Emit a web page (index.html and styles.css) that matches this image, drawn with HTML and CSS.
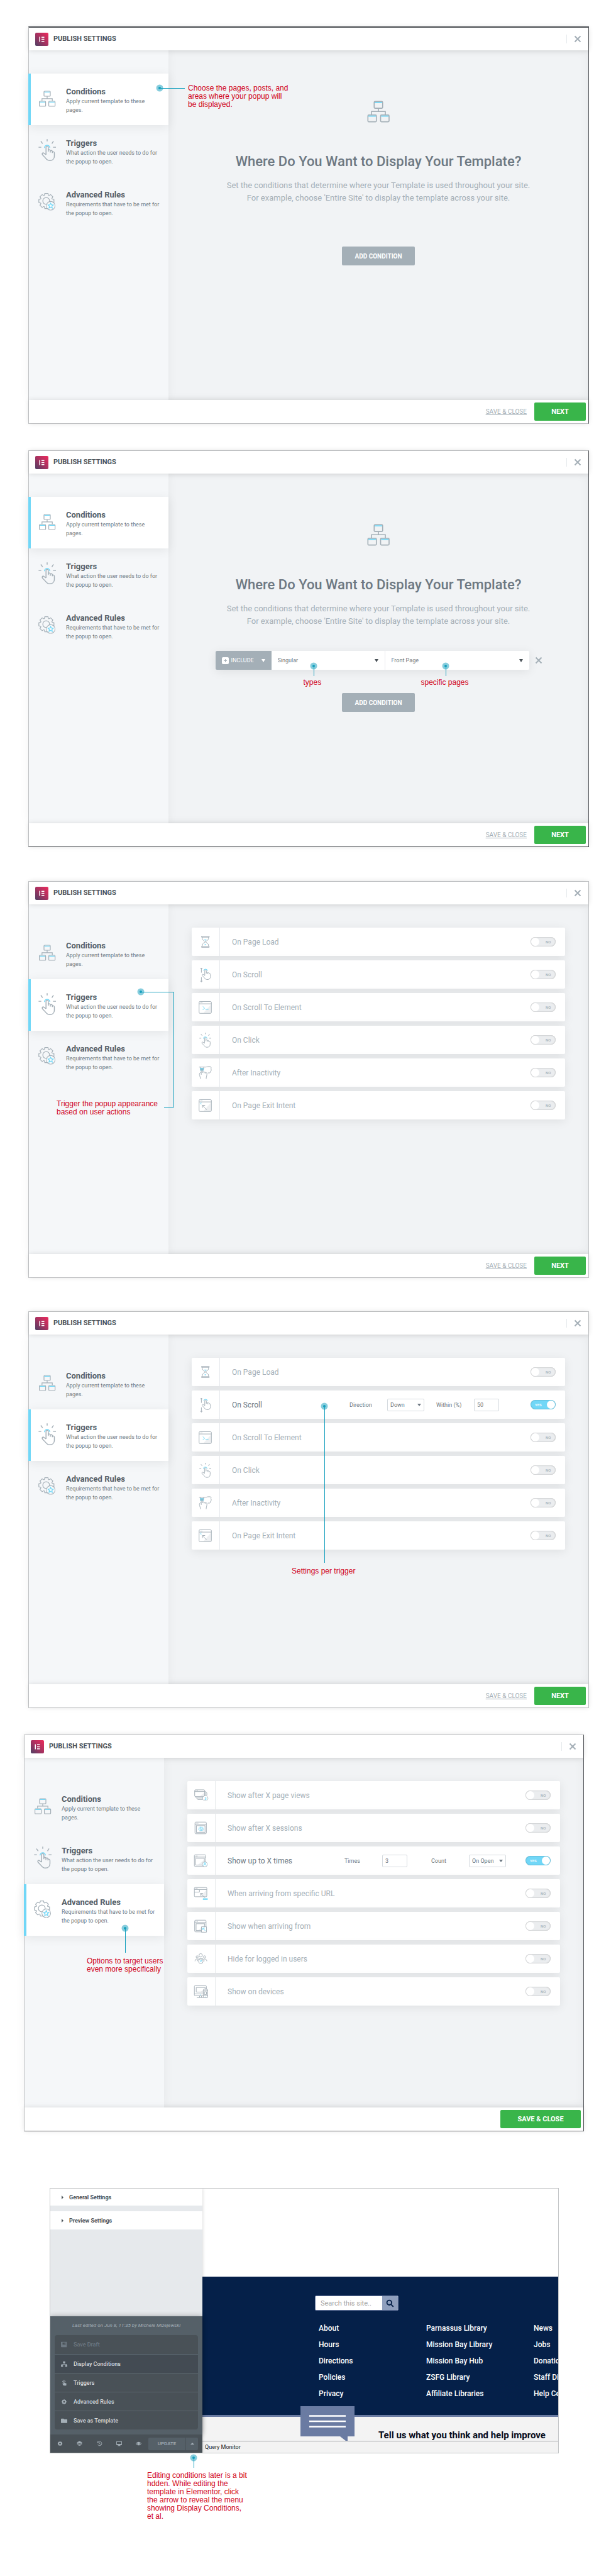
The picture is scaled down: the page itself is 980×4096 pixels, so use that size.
FILE: index.html
```html
<!DOCTYPE html>
<html lang="en">
<head>
<meta charset="utf-8">
<meta name="viewport" content="width=device-width, initial-scale=1">
<title>Publish Settings walkthrough</title>
<link rel="stylesheet" href="styles.css">
</head>
<body>
<svg class="defs" aria-hidden="true">
  <defs>
    <linearGradient id="brand" x1="0" y1="1" x2="1" y2="0"><stop offset="0" stop-color="#4c4064"/><stop offset=".5" stop-color="#a83260"/><stop offset="1" stop-color="#ee2a5c"/></linearGradient>
    <g id="logo"><rect width="21" height="21" rx="2" fill="url(#brand)"/><path d="M6.500 6.500h1.500v8h-1.500zM10 6.500h4.500v1.500h-4.500zM10 9.800h4.500v1.500h-4.500zM10 13h4.500v1.500h-4.500z" fill="#fff"/></g>
    <g id="tree"><path d="M14 16v3.800M5.800 23.500v-3.700h16.400v3.700" class="g"/><rect x="9" y="8" width="10" height="8" rx="1" class="g"/><rect x="1.600" y="24" width="10" height="8" rx="1" class="g"/><rect x="16.600" y="24" width="10" height="8" rx="1" class="g"/><path d="M9.600 9.300h8.800M2.200 25.300h8.800M17.200 25.300h8.800" class="b"/></g>
    <path id="gear" d="M-2.500-12L2.500-12 3.300-9 4-8.700 6.700-10.200 10.200-6.700 8.700-4 9-3.300 12-2.500 12 2.500 9 3.300 8.700 4 10.200 6.700 6.700 10.200 4 8.700 3.300 9 2.500 12-2.500 12-3.300 9-4 8.700-6.700 10.200-10.200 6.700-8.700 4-9 3.300-12 2.500-12-2.500-9-3.300-8.700-4-10.200-6.700-6.700-10.200-4-8.700-3.300-9Z"/>
    <g id="rules"><use href="#gear" x="12.800" y="18.600" class="g"/><circle cx="12.500" cy="18.500" r="5.400" class="g"/><circle cx="19.600" cy="26.200" r="6.800" class="g"/><circle cx="19.600" cy="26.200" r="6.200" fill="#f9fafb"/><path d="M19.600 22l1.200 2.700 2.900.3-2.200 2 .7 2.900-2.600-1.500-2.600 1.500.7-2.900-2.200-2 2.900-.3z" class="b"/></g>
    <path id="hand" d="M85 97V64a5 5 0 0 1 10 0v20M95 77a5 5 0 0 1 9 2v8M104 80a5 5 0 0 1 9 3v6M113 84c5-2 9 1 9 6v13c0 12-8 20-20 20-10 0-14-4-19-11L69 97c-3-5 1-9 5-8l11 8"/>
    <g id="click"><use href="#hand" x="-2" y="15" class="g"/><path d="M88 43v10M60 52l8 11M116 52l-7 11M50 79h12M114 79h13" class="g"/><path d="M76 82a12 12 0 0 1 24 0" class="b"/></g>
    <g id="load"><path d="M64 54h50v6H64zM64 120h50v6H64zM69 60v10c0 9 14 14 20 20 6-6 20-11 20-20V60M69 120v-10c0-9 14-14 20-20 6 6 20 11 20 20v10" class="g"/><path d="M83 77h12l-6 4zM84 105l7 3-6 3" class="b"/></g>
    <g id="scroll"><use href="#hand" class="g"/><path d="M63 78V47M56 55l7-8 7 8M63 108v30M56 131l7 8 7-8" class="g"/><path d="M78 67a12 12 0 0 1 24 0" class="b"/></g>
    <g id="win"><path d="M126 72v56H76z" fill="#eef0f2"/><rect x="48" y="53" width="80" height="77" rx="6" class="g"/><path d="M48 68h80M55 61h3M61 61h3M67 61h3" class="g"/></g>
    <g id="element"><use href="#win"/><path d="M72 85l12 11-12 12M89 104h20" class="b"/></g>
    <g id="exit"><use href="#win"/><path d="M98 120L70 91M70 106V90h17" class="g"/><path d="M56 74l7 8M63 74l-7 8" class="b"/></g>
    <g id="idle"><rect x="54" y="60" width="24" height="17" fill="#71c9e4"/><path d="M48 54h44l13-3h16c7 2 7 8 2 11 7 2 7 8 1 10 5 3 4 10-2 10 2 6-2 10-8 10h-9M55 54v8M78 54v14M62 104V74c0-8 10-8 10 0v18M72 86c4-4 9-2 9 4v4M81 88c4-3 9-1 9 4v4M90 91c5-2 9 0 9 5 1 14-5 20-5 35M62 88c-12 2-14 12-10 22l6 21" class="g"/></g>
    <g id="views"><path d="M112 72v26H80z" fill="#eef0f2"/><rect x="48" y="55" width="65" height="44" rx="5" class="g"/><path d="M48 66h65M54 61h3M60 61h3M66 61h3M53 100l6 8h40M62 110l6 8h32M114 63l6 4v24M121 70l6 4v18" class="g"/><circle cx="117" cy="110" r="17" class="g"/><circle cx="117" cy="110" r="15" fill="#fff"/><text x="117" y="119" class="num">3</text></g>
    <g id="frame"><rect x="48" y="52" width="74" height="76" rx="6" class="g"/><path d="M48 67h74M54 60h3M60 60h3M66 60h3" class="g"/><rect x="57" y="75" width="56" height="44" class="g"/><path d="M111 84v33H72z" fill="#eef0f2"/></g>
    <g id="sessions"><use href="#frame" x="2"/><path d="M72 98c9-12 25-12 34 0-9 12-25 12-34 0zM89 92v12M83 96l12 4M74 88l4 4M82 83l2 5M89 81v5M97 83l-2 5M104 88l-4 4" class="b"/></g>
    <g id="times"><use href="#frame" x="-2"/><circle cx="114" cy="114" r="16" class="g"/><circle cx="114" cy="114" r="14" fill="#fff"/><circle cx="114" cy="108" r="5" class="b"/><path d="M105 123c0-13 18-13 18 0" class="b"/></g>
    <g id="url"><path d="M126 68v42H82z" fill="#eef0f2"/><rect x="46" y="52" width="81" height="60" rx="5" class="g"/><path d="M46 65h81M52 58h3M58 58h3M64 58h3M46 82h33V66M116 120L86 91M86 106V90h16" class="g"/><path d="M103 124h28v7h-28z" class="b"/></g>
    <g id="from"><use href="#frame"/><path d="M92 95h33v35H92z" class="g"/><path d="M94 97h29v31H94z" fill="#fff"/><path d="M118 122l-16-17M101 116v-12h12" class="b"/></g>
    <g id="logged"><circle cx="87" cy="68" r="11" class="g"/><circle cx="64" cy="78" r="7" class="g"/><circle cx="112" cy="78" r="7" class="g"/><path d="M50 106c0-10 6-16 18-14M127 106c0-10-6-16-18-14M66 106c0-26 44-26 44 0" class="g"/><circle cx="88" cy="106" r="15" class="g"/><path d="M82 100l12 12M94 100l-12 12" class="b"/></g>
    <g id="devices"><path d="M116 70v22H88z" fill="#eef0f2"/><rect x="46" y="52" width="78" height="66" rx="6" class="g"/><path d="M58 64h58v30H58zM46 106h60M80 118v10M92 118v10M62 130h44" class="g"/><rect x="104" y="76" width="29" height="55" rx="4" class="g"/><path d="M106 78h25v51h-25z" fill="#fff"/><path d="M106 84h25M106 118h25M111 92h14v18h-14z" class="g"/><path d="M86 110v6M117 125h3" class="b"/></g>
    <path id="cross" d="M.5.5l9 9M9.500.5l-9 9"/>
  </defs>
</svg>

<main class="page">

<!-- Conditions, nothing added yet -->
<section class="modal modal-empty">
  <header class="modal-head"><svg class="logo" viewBox="0 0 21 21"><use href="#logo"/></svg><h2>PUBLISH SETTINGS</h2><button class="close" aria-label="Close"><svg viewBox="0 0 10 10"><use href="#cross"/></svg></button></header>
  <div class="modal-body">
    <nav class="tabs">
      <a href="#" class="tab active"><svg viewBox="0 0 28 40"><use href="#tree"/></svg><span><strong>Conditions</strong>Apply current template to these<br>pages.</span></a>
      <a href="#" class="tab"><svg viewBox="49 37 78 111"><use href="#click"/></svg><span><strong>Triggers</strong>What action the user needs to do for the popup to open.</span></a>
      <a href="#" class="tab"><svg viewBox="0 0 28 40"><use href="#rules"/></svg><span><strong>Advanced Rules</strong>Requirements that have to be met for the popup to open.</span></a>
    </nav>
    <div class="where">
      <svg class="hero" viewBox="1 7 26 26"><use href="#tree"/></svg>
      <h1>Where Do You Want to Display Your Template?</h1>
      <p>Set the conditions that determine where your Template is used throughout your site.<br>For example, choose 'Entire Site' to display the template across your site.</p>
      <button class="add">ADD CONDITION</button>
    </div>
  </div>
  <footer class="modal-foot"><a href="#">SAVE &amp; CLOSE</a><button class="go">NEXT</button></footer>
  <svg class="lead lead-a" viewBox="0 0 48 12"><circle cx="6" cy="6" r="5.500"/><path d="M6 6.500h40"/><circle cx="6" cy="6" r="2" class="dot"/></svg>
  <p class="note note-a">Choose the pages, posts, and<br>areas where your popup will<br>be displayed.</p>
</section>

<!-- Conditions with one rule -->
<section class="modal modal-rule">
  <header class="modal-head"><svg class="logo" viewBox="0 0 21 21"><use href="#logo"/></svg><h2>PUBLISH SETTINGS</h2><button class="close" aria-label="Close"><svg viewBox="0 0 10 10"><use href="#cross"/></svg></button></header>
  <div class="modal-body">
    <nav class="tabs">
      <a href="#" class="tab active"><svg viewBox="0 0 28 40"><use href="#tree"/></svg><span><strong>Conditions</strong>Apply current template to these<br>pages.</span></a>
      <a href="#" class="tab"><svg viewBox="49 37 78 111"><use href="#click"/></svg><span><strong>Triggers</strong>What action the user needs to do for the popup to open.</span></a>
      <a href="#" class="tab"><svg viewBox="0 0 28 40"><use href="#rules"/></svg><span><strong>Advanced Rules</strong>Requirements that have to be met for the popup to open.</span></a>
    </nav>
    <div class="where">
      <svg class="hero" viewBox="1 7 26 26"><use href="#tree"/></svg>
      <h1>Where Do You Want to Display Your Template?</h1>
      <p>Set the conditions that determine where your Template is used throughout your site.<br>For example, choose 'Entire Site' to display the template across your site.</p>
      <div class="rule">
        <div class="rule-fields">
          <div class="pick include"><svg class="plus" viewBox="0 0 11 11"><rect width="11" height="11" rx="2" fill="#fff"/><path d="M5.500 3v5M3 5.500h5" stroke="#a4afb7"/></svg><select aria-label="Include or exclude"><option>INCLUDE</option></select></div>
          <div class="pick type"><select aria-label="Type"><option>Singular</option></select>
            <svg class="lead lead-down" viewBox="0 0 12 22"><circle cx="6" cy="6" r="5.500"/><path d="M6.500 6v16"/><circle cx="6" cy="6" r="2" class="dot"/></svg><span class="note note-down">types</span></div>
          <div class="pick where-page"><select aria-label="Specific page"><option>Front Page</option></select>
            <svg class="lead lead-down" viewBox="0 0 12 22"><circle cx="6" cy="6" r="5.500"/><path d="M6.500 6v16"/><circle cx="6" cy="6" r="2" class="dot"/></svg><span class="note note-down">specific pages</span></div>
        </div>
        <button class="remove" aria-label="Remove condition"><svg viewBox="0 0 10 10"><use href="#cross"/></svg></button>
      </div>
      <button class="add">ADD CONDITION</button>
    </div>
  </div>
  <footer class="modal-foot"><a href="#">SAVE &amp; CLOSE</a><button class="go">NEXT</button></footer>
</section>

<!-- Triggers, all off -->
<section class="modal modal-triggers">
  <header class="modal-head"><svg class="logo" viewBox="0 0 21 21"><use href="#logo"/></svg><h2>PUBLISH SETTINGS</h2><button class="close" aria-label="Close"><svg viewBox="0 0 10 10"><use href="#cross"/></svg></button></header>
  <div class="modal-body">
    <nav class="tabs">
      <a href="#" class="tab"><svg viewBox="0 0 28 40"><use href="#tree"/></svg><span><strong>Conditions</strong>Apply current template to these<br>pages.</span></a>
      <a href="#" class="tab active"><svg viewBox="49 37 78 111"><use href="#click"/></svg><span><strong>Triggers</strong>What action the user needs to do for the popup to open.</span></a>
      <a href="#" class="tab"><svg viewBox="0 0 28 40"><use href="#rules"/></svg><span><strong>Advanced Rules</strong>Requirements that have to be met for the popup to open.</span></a>
    </nav>
    <div class="list">
      <div class="row"><svg viewBox="0 0 180 180"><use href="#load"/></svg><h3>On Page Load</h3><label class="toggle"><input type="checkbox" aria-label="On Page Load"><span>NO</span></label></div>
      <div class="row"><svg viewBox="0 0 180 180"><use href="#scroll"/></svg><h3>On Scroll</h3><label class="toggle"><input type="checkbox" aria-label="On Scroll"><span>NO</span></label></div>
      <div class="row"><svg viewBox="0 0 180 180"><use href="#element"/></svg><h3>On Scroll To Element</h3><label class="toggle"><input type="checkbox" aria-label="On Scroll To Element"><span>NO</span></label></div>
      <div class="row"><svg viewBox="0 0 180 180"><use href="#click"/></svg><h3>On Click</h3><label class="toggle"><input type="checkbox" aria-label="On Click"><span>NO</span></label></div>
      <div class="row"><svg viewBox="0 0 180 180"><use href="#idle"/></svg><h3>After Inactivity</h3><label class="toggle"><input type="checkbox" aria-label="After Inactivity"><span>NO</span></label></div>
      <div class="row"><svg viewBox="0 0 180 180"><use href="#exit"/></svg><h3>On Page Exit Intent</h3><label class="toggle"><input type="checkbox" aria-label="On Page Exit Intent"><span>NO</span></label></div>
    </div>
  </div>
  <footer class="modal-foot"><a href="#">SAVE &amp; CLOSE</a><button class="go">NEXT</button></footer>
  <svg class="lead lead-c" viewBox="0 0 60 192"><circle cx="6" cy="6" r="5.500"/><path d="M6 6.500h52.500v183H43"/><circle cx="6" cy="6" r="2" class="dot"/></svg>
  <p class="note note-c">Trigger the popup appearance<br>based on user actions</p>
</section>

<!-- Triggers, On Scroll enabled -->
<section class="modal modal-scroll">
  <header class="modal-head"><svg class="logo" viewBox="0 0 21 21"><use href="#logo"/></svg><h2>PUBLISH SETTINGS</h2><button class="close" aria-label="Close"><svg viewBox="0 0 10 10"><use href="#cross"/></svg></button></header>
  <div class="modal-body">
    <nav class="tabs">
      <a href="#" class="tab"><svg viewBox="0 0 28 40"><use href="#tree"/></svg><span><strong>Conditions</strong>Apply current template to these<br>pages.</span></a>
      <a href="#" class="tab active"><svg viewBox="49 37 78 111"><use href="#click"/></svg><span><strong>Triggers</strong>What action the user needs to do for the popup to open.</span></a>
      <a href="#" class="tab"><svg viewBox="0 0 28 40"><use href="#rules"/></svg><span><strong>Advanced Rules</strong>Requirements that have to be met for the popup to open.</span></a>
    </nav>
    <div class="list">
      <div class="row"><svg viewBox="0 0 180 180"><use href="#load"/></svg><h3>On Page Load</h3><label class="toggle"><input type="checkbox" aria-label="On Page Load"><span>NO</span></label></div>
      <div class="row on"><svg viewBox="0 0 180 180"><use href="#scroll"/></svg><h3>On Scroll</h3>
        <div class="field"><label for="direction">Direction</label><span class="drop"><select id="direction"><option>Down</option></select></span></div>
        <div class="field"><label for="within">Within (%)</label><input id="within" type="text" value="50"></div>
        <label class="toggle"><input type="checkbox" aria-label="On Scroll" checked><span>YES</span></label></div>
      <div class="row"><svg viewBox="0 0 180 180"><use href="#element"/></svg><h3>On Scroll To Element</h3><label class="toggle"><input type="checkbox" aria-label="On Scroll To Element"><span>NO</span></label></div>
      <div class="row"><svg viewBox="0 0 180 180"><use href="#click"/></svg><h3>On Click</h3><label class="toggle"><input type="checkbox" aria-label="On Click"><span>NO</span></label></div>
      <div class="row"><svg viewBox="0 0 180 180"><use href="#idle"/></svg><h3>After Inactivity</h3><label class="toggle"><input type="checkbox" aria-label="After Inactivity"><span>NO</span></label></div>
      <div class="row"><svg viewBox="0 0 180 180"><use href="#exit"/></svg><h3>On Page Exit Intent</h3><label class="toggle"><input type="checkbox" aria-label="On Page Exit Intent"><span>NO</span></label></div>
    </div>
  </div>
  <footer class="modal-foot"><a href="#">SAVE &amp; CLOSE</a><button class="go">NEXT</button></footer>
  <svg class="lead lead-d" viewBox="0 0 12 255"><circle cx="6" cy="6" r="5.500"/><path d="M6.500 6v249"/><circle cx="6" cy="6" r="2" class="dot"/></svg>
  <p class="note note-d">Settings per trigger</p>
</section>

<!-- Advanced rules -->
<section class="modal modal-rules">
  <header class="modal-head"><svg class="logo" viewBox="0 0 21 21"><use href="#logo"/></svg><h2>PUBLISH SETTINGS</h2><button class="close" aria-label="Close"><svg viewBox="0 0 10 10"><use href="#cross"/></svg></button></header>
  <div class="modal-body">
    <nav class="tabs">
      <a href="#" class="tab"><svg viewBox="0 0 28 40"><use href="#tree"/></svg><span><strong>Conditions</strong>Apply current template to these<br>pages.</span></a>
      <a href="#" class="tab"><svg viewBox="49 37 78 111"><use href="#click"/></svg><span><strong>Triggers</strong>What action the user needs to do for the popup to open.</span></a>
      <a href="#" class="tab active"><svg viewBox="0 0 28 40"><use href="#rules"/></svg><span><strong>Advanced Rules</strong>Requirements that have to be met for the popup to open.</span></a>
    </nav>
    <div class="list">
      <div class="row"><svg viewBox="0 0 180 180"><use href="#views"/></svg><h3>Show after X page views</h3><label class="toggle"><input type="checkbox" aria-label="Show after X page views"><span>NO</span></label></div>
      <div class="row"><svg viewBox="0 0 180 180"><use href="#sessions"/></svg><h3>Show after X sessions</h3><label class="toggle"><input type="checkbox" aria-label="Show after X sessions"><span>NO</span></label></div>
      <div class="row on"><svg viewBox="0 0 180 180"><use href="#times"/></svg><h3>Show up to X times</h3>
        <div class="field"><label for="times-count">Times</label><input id="times-count" type="text" value="3"></div>
        <div class="field"><label for="count">Count</label><span class="drop"><select id="count"><option>On Open</option></select></span></div>
        <label class="toggle"><input type="checkbox" aria-label="Show up to X times" checked><span>YES</span></label></div>
      <div class="row"><svg viewBox="0 0 180 180"><use href="#url"/></svg><h3>When arriving from specific URL</h3><label class="toggle"><input type="checkbox" aria-label="When arriving from specific URL"><span>NO</span></label></div>
      <div class="row"><svg viewBox="0 0 180 180"><use href="#from"/></svg><h3>Show when arriving from</h3><label class="toggle"><input type="checkbox" aria-label="Show when arriving from"><span>NO</span></label></div>
      <div class="row"><svg viewBox="0 0 180 180"><use href="#logged"/></svg><h3>Hide for logged in users</h3><label class="toggle"><input type="checkbox" aria-label="Hide for logged in users"><span>NO</span></label></div>
      <div class="row"><svg viewBox="0 0 180 180"><use href="#devices"/></svg><h3>Show on devices</h3><label class="toggle"><input type="checkbox" aria-label="Show on devices"><span>NO</span></label></div>
    </div>
  </div>
  <footer class="modal-foot"><button class="go wide">SAVE &amp; CLOSE</button></footer>
  <svg class="lead lead-e" viewBox="0 0 12 45"><circle cx="6" cy="6" r="5.500"/><path d="M6.500 6v39"/><circle cx="6" cy="6" r="2" class="dot"/></svg>
  <p class="note note-e">Options to target users<br>even more specifically</p>
</section>

<!-- Editor with the publish menu open -->
<section class="editor">
  <div class="editor-inner">
  <aside class="panel">
    <button class="fold first">General Settings</button>
    <button class="fold">Preview Settings</button>
    <div class="drawer">
      <p>Last edited on Jun 8, 11:35 by Michele Mizejewski</p>
      <div class="menu">
        <button disabled><svg viewBox="0 0 12 12"><path fill-rule="evenodd" d="M1.500 1h9.500v10H1a1 1 0 0 1-1-1V2a1 1 0 0 1 1.500-1zM3 2v4h6V2zM7 2.500h1.300v2.700H7z"/></svg>Save Draft</button>
        <button class="current"><svg viewBox="0 0 12 12"><path d="M4 1h4v3.500H6.400V6H11v2h1v3H8V8h2V7H2v1h2v3H0V8h1V6h4.600V4.500H4z"/></svg>Display Conditions</button>
        <button><svg viewBox="0 0 12 12"><path d="M4.600 3.500a1 1 0 0 1 2 0V6l3 .6c.5.100.9.600.8 1.200L10 11H5L2.500 7.500c.5-.8 1.500-.4 2.100.3z"/><path d="M3 4.500a2.700 2.700 0 1 1 5.200 0" fill="none" stroke="currentColor"/></svg>Triggers</button>
        <button><svg viewBox="-16 -16 32 32"><use href="#gear"/><circle r="4.500" fill="#495157"/></svg>Advanced Rules</button>
        <button><svg viewBox="0 0 12 12"><path d="M1 2h4l1.300 1.300H11a1 1 0 0 1 1 1V9.500a1 1 0 0 1-1 1H1a1 1 0 0 1-1-1V3a1 1 0 0 1 1-1z"/></svg>Save as Template</button>
      </div>
    </div>
    <div class="tools">
      <button aria-label="Settings"><svg viewBox="-15 -15 30 30"><use href="#gear"/><circle r="4.500" fill="#495157"/></svg></button>
      <button aria-label="Navigator"><svg viewBox="0 0 12 12"><path d="M6 .8l6 2.500-6 2.500-6-2.500zM1.500 5L6 6.900 10.500 5l1.500.7-6 2.500L0 5.700zM1.500 7.600L6 9.500l4.500-1.900 1.500.7-6 2.500-6-2.500z"/></svg></button>
      <button aria-label="History"><svg viewBox="0 0 12 12"><path d="M2.500 3a4.500 4.500 0 1 1-.5 5M1.500 1v3h3M6.200 3.500V6.500l1.800 1" fill="none" stroke="currentColor" stroke-width="1.200"/></svg></button>
      <button aria-label="Responsive mode"><svg viewBox="0 0 12 12"><path fill-rule="evenodd" d="M1 1h10a1 1 0 0 1 1 1v6a1 1 0 0 1-1 1H7.500v1H9v1H3v-1h1.500V9H1a1 1 0 0 1-1-1V2a1 1 0 0 1 1-1zM1.200 2.200v4.600h9.600V2.200z"/></svg></button>
      <button aria-label="Preview"><svg viewBox="0 0 12 12"><path fill-rule="evenodd" d="M0 6c3-5 9-5 12 0-3 5-9 5-12 0zM1.400 6c1 1.400 2 2 3 2.200a2.900 2.900 0 0 1 0-4.400C3.400 4 2.400 4.600 1.400 6zM10.600 6c-1-1.400-2-2-3-2.200a2.900 2.900 0 0 1 0 4.400c1-.2 2-.8 3-2.200z"/></svg></button>
      <button class="update">UPDATE</button><button class="more" aria-label="Save options"></button>
    </div>
  </aside>
  <div class="site">
    <div class="blank"></div>
    <div class="navy">
      <form class="search"><input type="text" placeholder="Search this site.." aria-label="Search this site"><button type="button" aria-label="Search"><svg viewBox="0 0 14 14"><circle cx="5.700" cy="5.700" r="4"/><path d="M8.700 8.700l4 4"/></svg></button></form>
      <div class="links">
        <ul><li><a href="#">About</a></li><li><a href="#">Hours</a></li><li><a href="#">Directions</a></li><li><a href="#">Policies</a></li><li><a href="#">Privacy</a></li></ul>
        <ul><li><a href="#">Parnassus Library</a></li><li><a href="#">Mission Bay Library</a></li><li><a href="#">Mission Bay Hub</a></li><li><a href="#">ZSFG Library</a></li><li><a href="#">Affiliate Libraries</a></li></ul>
        <ul><li><a href="#">News</a></li><li><a href="#">Jobs</a></li><li><a href="#">Donations</a></li><li><a href="#">Staff Directory</a></li><li><a href="#">Help Center</a></li></ul>
      </div>
    </div>
    <div class="feedback">
      <svg class="chat" viewBox="0 0 86 55"><path d="M0 0h86v48H75v7h-3l-9-7H0z" fill="#6a7ba2"/><path d="M14 15.500h58M14 24h58M14 32.500h58" stroke="#fff" stroke-width="2.500"/></svg>
      <strong>Tell us what you think and help improve</strong>
    </div>
    <div class="monitor">Query Monitor</div>
  </div>
  </div>
  <svg class="lead lead-f" viewBox="0 0 12 22"><circle cx="6" cy="6" r="5.500"/><path d="M6.500 6v16"/><circle cx="6" cy="6" r="2" class="dot"/></svg>
  <p class="note note-f">Editing conditions later is a bit<br>hdden. While editing the<br>template in Elementor, click<br>the arrow to reveal the menu<br>showing Display Conditions,<br>et al.</p>
</section>

</main>
</body>
</html>
```

FILE: styles.css
```css
* { box-sizing: border-box; }
body { margin: 0; background: #fff; font-family: Roboto, "Liberation Sans", sans-serif; color: #6d7882; }
h1, h2, h3, p, ul { margin: 0; padding: 0; }
ul { list-style: none; }
button, input, select { font: inherit; color: inherit; margin: 0; padding: 0; border: 0; background: none; }
a { color: inherit; text-decoration: none; }
svg { display: block; flex: none; }
.defs { position: absolute; width: 0; height: 0; }
.g { fill: none; stroke: #a4afb7; stroke-width: 4; }
.b { fill: none; stroke: #71d7f7; stroke-width: 4; }
#tree .g, #rules .g { stroke-width: 1.2; }
#tree .b, #rules .b { stroke-width: 1.2; }
.num { font: 700 24px Roboto, sans-serif; fill: #71d7f7; text-anchor: middle; }

.page { padding: 42px 43px 195px 45px; }

/* Modal frame */
.modal { position: relative; border: 1px solid #c4c6c8; background: #fff; }
.modal-empty { border-top: 2px solid #4a4e53; border-right-color: #55585c; }
.modal-rule { margin-top: 42px; border-right-color: #55585c; border-bottom-color: #33373d; }
.modal-triggers { margin-top: 54px; }
.modal-scroll { margin-top: 53px; }
.modal-rules { margin: 42px 8px 0 -7px; border-right-color: #55585c; border-bottom-color: #77797c; }

.modal-head { position: relative; z-index: 2; display: flex; align-items: center; gap: 8px; height: 36px; padding: 0 12px 0 10px; background: #fff; box-shadow: 0 0 8px rgba(0, 0, 0, .14); }
.logo { width: 21px; height: 21px; }
.modal-head h2 { font-size: 11px; line-height: 14px; font-weight: 700; color: #495157; }
.close { margin-left: auto; padding: 2px 0 2px 12px; border-left: 1px solid #e6e9ec; }
.close svg, .remove svg { width: 10px; height: 10px; stroke: #a4afb7; stroke-width: 2; fill: none; overflow: visible; }

.modal-body { display: grid; grid-template-columns: 222px 1fr; min-height: 556px; background: #f1f3f5; box-shadow: inset 0 0 16px rgba(0, 0, 0, .05); }
.modal-foot { position: relative; z-index: 2; display: flex; align-items: center; justify-content: flex-end; gap: 12px; height: 37px; padding: 0 4px; background: #fff; box-shadow: 0 0 8px rgba(0, 0, 0, .12); }
.modal-foot a { font-size: 10px; color: #a4afb7; text-decoration: underline; }
.go { width: 82px; height: 29px; border-radius: 2px; background: #39b54a; color: #fff; font-size: 11px; font-weight: 700; }
.go.wide { width: 128px; }

/* Tabs */
.tabs { padding-top: 37px; background: #f5f7f9; box-shadow: 0 0 16px rgba(0, 0, 0, .05); }
.tab { display: flex; gap: 16px; min-height: 82px; padding: 20px 8px 17px 11px; border-left: 4px solid transparent; font-size: 9px; line-height: 14px; }
.tab svg { width: 28px; height: 40px; }
.tab strong { display: block; font-size: 13px; line-height: 17px; color: #556068; }
.tab.active { position: relative; margin-left: -1px; padding-left: 12px; background: #fff; border-color: #71d7f7; box-shadow: 0 3px 16px rgba(0, 0, 0, .08); }

/* Conditions */
.where { display: flex; flex-direction: column; align-items: center; padding-top: 80px; text-align: center; }
.hero { width: 38px; height: 35px; }
.where h1 { margin-top: 49px; font-size: 22px; line-height: 26px; font-weight: 500; color: #6d7882; }
.where p { margin-top: 15px; font-size: 13px; line-height: 20px; color: #a4afb7; }
.add { width: 116px; height: 30px; margin-top: 37px; border-radius: 2px; background: #a4afb7; color: #fff; font-size: 10px; font-weight: 700; }
.modal-empty .add { margin-top: 67px; }
.rule { display: flex; align-items: center; gap: 10px; margin-top: 37px; text-align: left; }
.rule-fields { display: flex; height: 30px; border-radius: 2px; background: #fff; box-shadow: 0 3px 16px rgba(0, 0, 0, .08); }
.pick { position: relative; display: flex; align-items: center; padding: 0 10px; font-size: 9px; }
.pick select { flex: 1; height: 30px; appearance: none; }
.pick::after, .drop::after { content: ""; border: 3px solid transparent; border-top: 5px solid #495157; border-bottom: 0; }
.include { width: 89px; gap: 4px; border-radius: 2px 0 0 2px; background: #a4afb7; color: #fff; }
.include::after { border-top-color: #fff; }
.plus { width: 11px; height: 11px; }
.type { width: 181px; border-right: 1px solid #e6e9ec; }
.where-page { width: 229px; }

/* Option rows */
.list { display: flex; flex-direction: column; gap: 7px; padding: 37px; }
.row { display: flex; align-items: center; height: 45px; padding-right: 15px; border-radius: 2px; background: #fff; box-shadow: 0 3px 16px rgba(0, 0, 0, .08); }
.row > svg { width: 45px; height: 45px; border-right: 1px solid #e6e9ec; }
.row h3 { flex: 1; padding-left: 19px; font-size: 12px; line-height: 16px; font-weight: 400; color: #a4afb7; }
.row.on h3 { color: #6d7882; }
.field { display: grid; grid-template-columns: 60px 59px; align-items: center; margin-right: 19px; font-size: 9px; }
.field + .toggle { margin-left: 12px; }
.field input { width: 40px; height: 20px; padding: 0 4px; border: 1px solid #d5dadf; border-radius: 2px; }
.drop { display: flex; align-items: center; height: 20px; padding: 0 4px; border: 1px solid #d5dadf; border-radius: 2px; }
.drop select { flex: 1; min-width: 0; appearance: none; }
.drop::after { border-width: 4px 3px 0; border-top-color: #6d7882; }
.toggle { display: grid; width: 40px; height: 15px; }
.toggle > * { grid-area: 1 / 1; }
.toggle input { appearance: none; height: 15px; border-radius: 8px; background: #ebedef; box-shadow: inset 0 0 2px rgba(0, 0, 0, .35); }
.toggle input::before { content: ""; display: block; width: 13px; height: 13px; margin: 1px; border-radius: 50%; background: #fff; }
.toggle span { z-index: 1; padding-left: 24px; font-size: 6px; line-height: 15px; font-weight: 500; color: #a4afb7; }
.toggle input:checked { background: #71d7f7; }
.toggle input:checked::before { margin-left: 26px; }
.toggle input:checked + span { padding-left: 7px; color: #fff; }

/* Call-outs */
.lead { position: absolute; z-index: 3; width: 12px; height: 22px; fill: #87cddd; }
.lead path { fill: none; stroke: #149fbd; }
.lead .dot { fill: #149fbd; }
.note { position: absolute; z-index: 3; font: 12px/13px "Liberation Sans", Arial, sans-serif; color: #d0021b; white-space: nowrap; }
.lead-a { left: 202px; top: 90px; width: 48px; height: 12px; }
.note-a { left: 253px; top: 90px; }
.lead-c { left: 172px; top: 169px; width: 60px; height: 192px; }
.note-c { left: 44px; top: 347px; }
.lead-d { left: 464px; top: 144px; height: 255px; }
.note-d { left: 418px; top: 406px; }
.lead-e { left: 154px; top: 301px; height: 45px; }
.note-e { left: 99px; top: 353px; }
.lead-f { left: 222px; top: 422px; }
.note-f { left: 154px; top: 450px; }
.lead-down { top: 18px; left: 61px; }
.note-down { top: 44px; left: 51px; }
.where-page .lead-down { left: 90px; }
.where-page .note-down { left: 57px; }

/* Editor */
.editor { position: relative; margin: 90px 48px 0 34px; border: 1px solid #c4c6c8; }
.editor-inner { display: grid; grid-template-columns: 242px 1fr; min-height: 420px; overflow: hidden; }
.panel { display: flex; flex-direction: column; background: #e6e9ec; z-index: 1; box-shadow: 0 0 5px rgba(0, 0, 0, .2); }
.fold { display: flex; align-items: center; gap: 9px; height: 29px; padding-left: 18px; background: #fff; color: #495157; font-size: 9px; font-weight: 700; }
.fold.first { height: 27px; margin-bottom: 9px; }
.fold::before { content: ""; border: 3px solid transparent; border-left: 3px solid #495157; border-right: 0; }
.drawer { margin-top: auto; padding: 0 7px 8px; background: #556068; box-shadow: 0 0 8px rgba(0, 0, 0, .3); }
.drawer p { font-size: 8px; line-height: 30px; font-style: italic; text-align: center; color: #a4afb7; }
.menu { display: flex; flex-direction: column; overflow: hidden; border-radius: 4px; background: #495157; }
.menu button { display: flex; align-items: center; gap: 10px; height: 30px; padding-left: 10px; color: #d5dadf; font-size: 9px; font-weight: 500; }
.menu button + button { border-top: 1px solid #5c676f; }
.menu button:disabled { color: #6d7882; }
.menu .current { background: #434b53; }
.menu svg { width: 10px; height: 10px; fill: #a4afb7; color: #a4afb7; }
.menu button:disabled svg { fill: #6d7882; }
.tools { display: flex; align-items: center; height: 29px; padding-right: 7px; background: #495157; color: #a4afb7; }
.tools button { flex: 1; display: flex; justify-content: center; }
.tools svg { width: 9px; height: 9px; fill: #a4afb7; }
.tools .update, .tools .more { align-items: center; flex: none; width: 59px; height: 20px; border-radius: 2px 0 0 2px; background: #556068; font-size: 8px; font-weight: 500; }
.tools .more { width: 19px; margin-left: 1px; border-radius: 0 2px 2px 0; }
.more::before { content: ""; border: 3px solid transparent; border-bottom: 3px solid #a4afb7; border-top: 0; }

.site { display: flex; flex-direction: column; min-width: 0; overflow: hidden; background: #f3f3f3; }
.blank { flex: 1; background: #fff; }
.navy { padding: 30px 0 21px 179px; border-bottom: 3px solid #6a7ba2; background: #052049; }
.search { display: flex; width: 133px; height: 24px; border: 1px solid #6a7ba2; border-radius: 2px; background: #fff; overflow: hidden; }
.search input { flex: 1; min-width: 0; padding-left: 8px; font-size: 11px; }
.search input::placeholder { color: #a3a3a3; opacity: 1; }
.search button { display: grid; place-items: center; width: 25px; background: #8f9fbd; }
.search svg { width: 13px; height: 13px; fill: none; stroke: #052049; stroke-width: 2; }
.links { display: grid; grid-template-columns: 171px 171px 1fr; margin-top: 15px; padding-left: 6px; font-size: 12px; line-height: 26px; font-weight: 500; color: #fff; white-space: nowrap; }
.feedback { position: relative; height: 38px; padding: 20px 0 0 280px; line-height: 18px; font-size: 15px; color: #060b1a; white-space: nowrap; }
.chat { position: absolute; left: 156px; top: -17px; width: 86px; height: 55px; }
.monitor { padding-left: 4px; border-top: 1px solid #a3a5a8; font-size: 9px; line-height: 18px; color: #222; }
```
